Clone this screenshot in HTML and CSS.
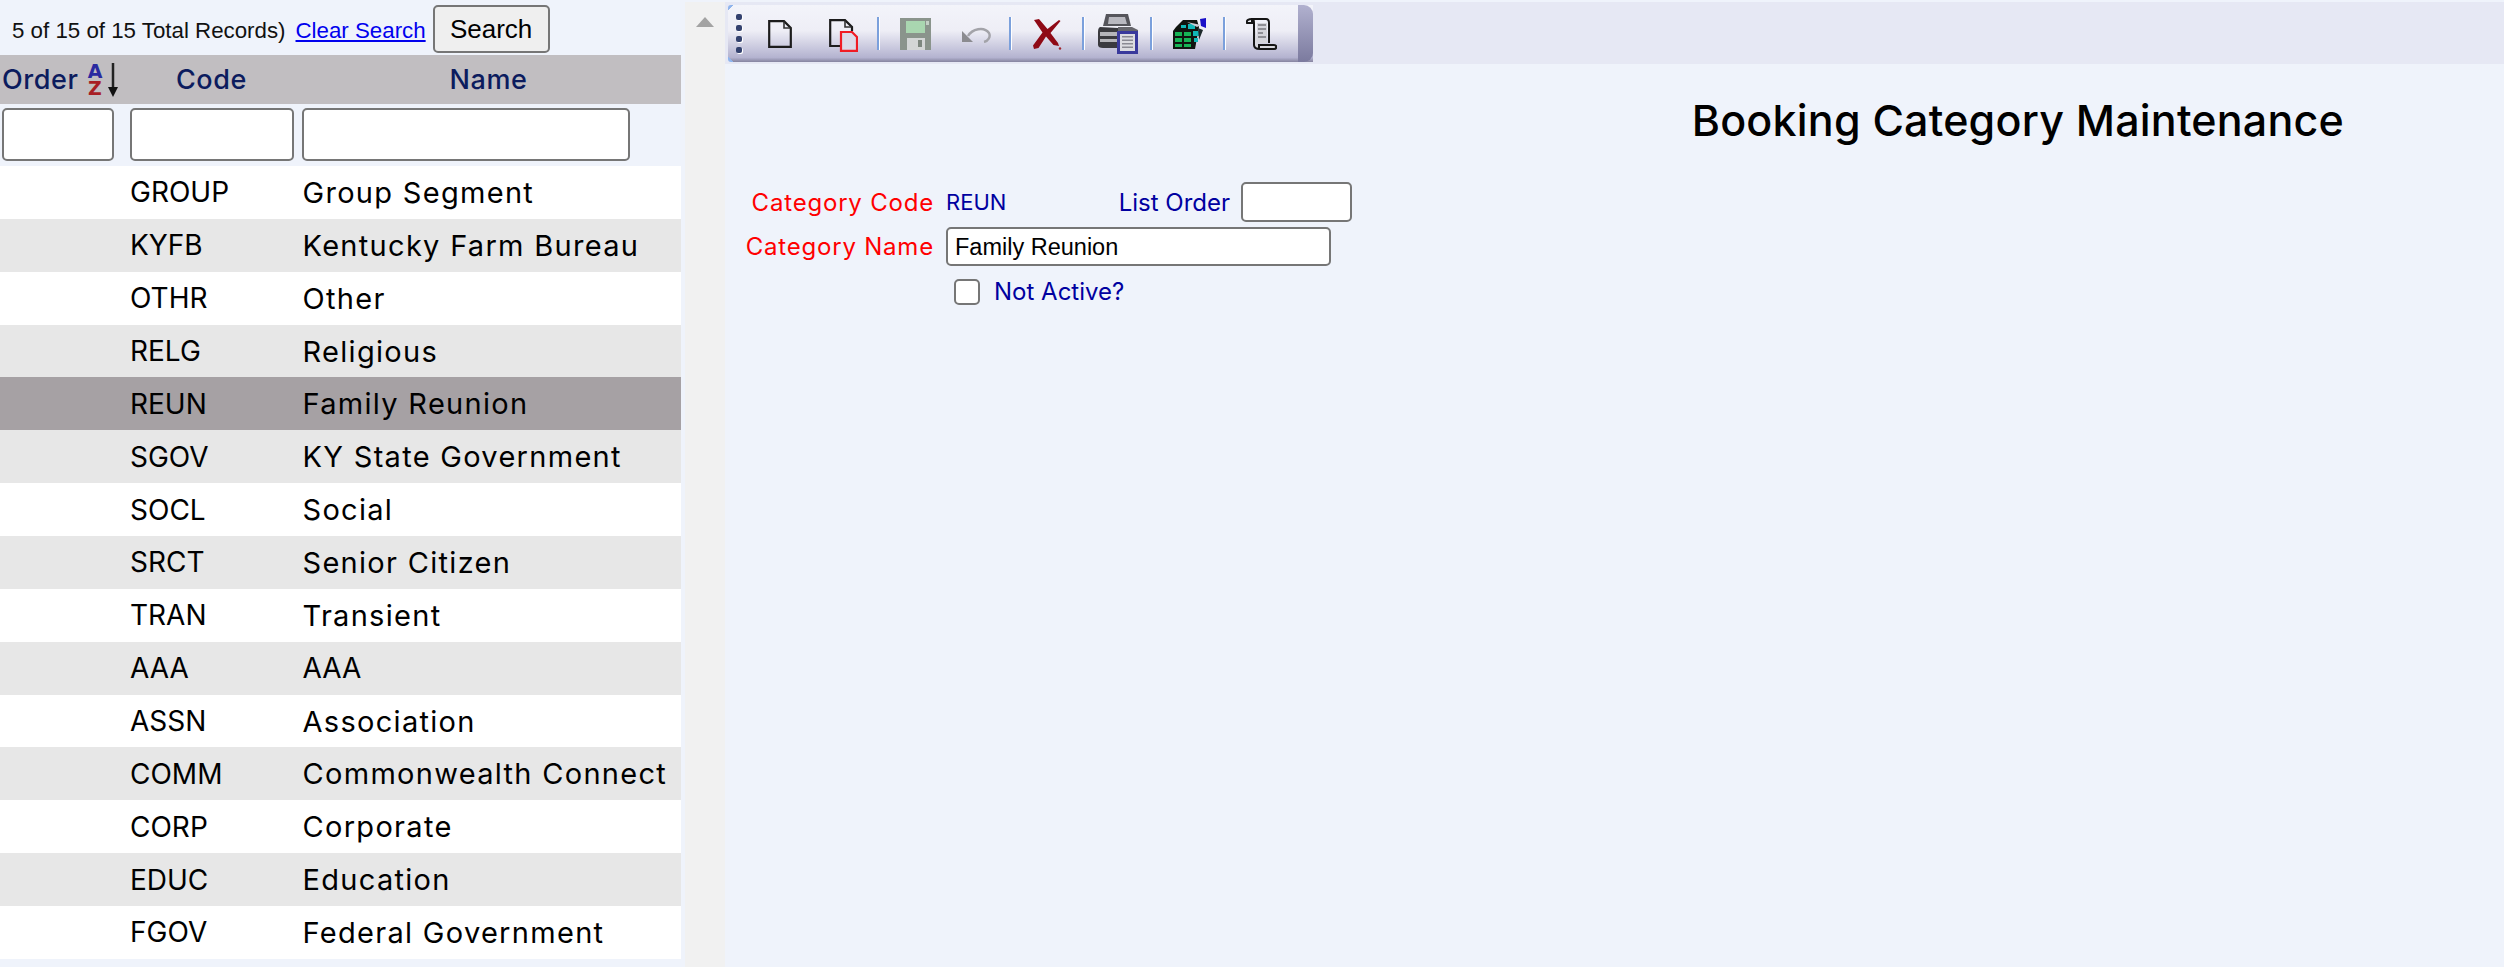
FILE: index.html
```html
<!DOCTYPE html>
<html lang="en">
<head>
    <meta charset="UTF-8">
    <title>Booking Category Maintenance</title>
    <link rel="stylesheet" href="styles.css">
</head>
<body>
    <div class="list-pane">
        <div class="search-bar">
            <span class="record-count">5 of 15 of 15 Total Records)</span>
            <a class="clear-link" href="#">Clear Search</a>
            <button class="search-btn" type="button">Search</button>
        </div>
        <div class="list-head">
            <div class="head-order">Order
                <svg class="sort-icon" width="34" height="36" viewBox="0 0 34 36">
                    <text x="9" y="16" class="sort-a">A</text>
                    <text x="9" y="33" class="sort-z">Z</text>
                    <path d="M27 1V27" stroke="#222" stroke-width="2.5"/>
                    <path d="M22 25H32L27 35Z" fill="#111"/>
                </svg>
            </div>
            <div class="head-code">Code</div>
            <div class="head-name">Name</div>
        </div>
        <div class="filter-row">
            <input class="filter-order" type="text">
            <input class="filter-code" type="text">
            <input class="filter-name" type="text">
        </div>
        <div class="rows">
            <div class="row"><span>GROUP</span><span>Group Segment</span></div>
            <div class="row"><span>KYFB</span><span>Kentucky Farm Bureau</span></div>
            <div class="row"><span>OTHR</span><span>Other</span></div>
            <div class="row"><span>RELG</span><span>Religious</span></div>
            <div class="row selected"><span>REUN</span><span>Family Reunion</span></div>
            <div class="row"><span>SGOV</span><span>KY State Government</span></div>
            <div class="row"><span>SOCL</span><span>Social</span></div>
            <div class="row"><span>SRCT</span><span>Senior Citizen</span></div>
            <div class="row"><span>TRAN</span><span>Transient</span></div>
            <div class="row"><span>AAA</span><span class="caps">AAA</span></div>
            <div class="row"><span>ASSN</span><span>Association</span></div>
            <div class="row"><span>COMM</span><span>Commonwealth Connect</span></div>
            <div class="row"><span>CORP</span><span>Corporate</span></div>
            <div class="row"><span>EDUC</span><span>Education</span></div>
            <div class="row"><span>FGOV</span><span>Federal Government</span></div>
        </div>
    </div>

    <div class="scroll-track"><div class="scroll-up"></div></div>

    <div class="main-pane">
        <div class="toolbar-band">
            <div class="toolbar">
                <div class="grip"><i></i><i></i><i></i><i></i></div>
                <svg class="tb-new" width="24" height="28" viewBox="0 0 24 28">
                    <path d="M1.2 1.2H16L22.8 8V26.8H1.2Z" fill="none" stroke="#1c1c1c" stroke-width="2.2"/>
                    <path d="M16 1.5V8H22.5" fill="none" stroke="#333" stroke-width="1.6"/>
                </svg>
                <svg class="tb-copy" width="29" height="33" viewBox="0 0 29 33">
                    <path d="M11 27H1.2V1.2H16L23 8V12" fill="none" stroke="#1c1c1c" stroke-width="2.2"/>
                    <path d="M16 1.5V8H22.5" fill="none" stroke="#333" stroke-width="1.6"/>
                    <path d="M12 13H23L28 18V31.8H12Z" fill="#dcdbe8" stroke="#f01c24" stroke-width="2.2"/>
                </svg>
                <span class="tb-sep sep-1"></span>
                <svg class="tb-save" width="31" height="32" viewBox="0 0 31 32">
                    <path d="M0 0H31V32H0Z" fill="#8a948c"/>
                    <path d="M6 3H25V15H6Z" fill="#a9d6b0"/>
                    <path d="M26 3H29V7H26Z" fill="#c3cfc5"/>
                    <path d="M7 20H25V32H7Z" fill="#d3d6d6"/>
                    <path d="M18 22H22V29H18Z" fill="#7d877f"/>
                </svg>
                <svg class="tb-undo" width="29" height="16" viewBox="0 0 29 16">
                    <path d="M6 9C10 2 22 -1 27 6C29 10 26 14 22 15" fill="none" stroke="#a3a3a9" stroke-width="2.4"/>
                    <path d="M0 4L11 15H0Z" fill="#8b8b90"/>
                </svg>
                <span class="tb-sep sep-2"></span>
                <svg class="tb-delete" width="30" height="32" viewBox="0 0 30 32">
                    <path d="M2 2L7 1L15.500 11L27 2L28.500 3L18.500 15L26 25L27 28L21.500 27L14 18.500L6.500 30L2 31L1 27.500L10.500 14.500Z" fill="#8f0a16"/>
                    <circle cx="28" cy="30.500" r="1.2" fill="#a0242c"/>
                </svg>
                <span class="tb-sep sep-3"></span>
                <svg class="tb-print" width="40" height="40" viewBox="0 0 40 40">
                    <path d="M8 0H30L33 12H5Z" fill="#55555b"/>
                    <path d="M11 3H27L29 10H10Z" fill="#b9b9c0"/>
                    <path d="M2 13C0 14 0 16 0 20V31C0 33 2 34 5 34H20V14Z" fill="#3a3a3f"/>
                    <path d="M2 18H20V22H2ZM2 25H20V28H2Z" fill="#b4b4b9"/>
                    <path d="M20 13H34L40 16V18H20Z" fill="#66666c"/>
                    <path d="M19 17H40V40H19Z" fill="#3a3a9c"/>
                    <path d="M22 20H37V37H22Z" fill="#dcdce0"/>
                    <path d="M24 22H35V23.500H24ZM24 25.500H35V27H24ZM24 29H35V30.500H24ZM24 32.500H35V34H24Z" fill="#8a8a92"/>
                </svg>
                <span class="tb-sep sep-4"></span>
                <svg class="tb-grid" width="33" height="31" viewBox="0 0 33 31">
                    <path d="M3 9L10 2H24L26 9L22 31H0V13Z" fill="#101510"/>
                    <path d="M2 14H9V18H2ZM11 14H18V18H11ZM2 20H9V24H2ZM11 20H18V24H11ZM2 26H9V29H2ZM11 26H18V29H11Z" fill="#16b455"/>
                    <path d="M8 7H13V10H8ZM15 6H22V11H15ZM20 13H26V18H20ZM21 20H25V24H21Z" fill="#10b8b8"/>
                    <path d="M14 4L28 7L24 9Z" fill="#c8ccd4"/>
                    <path d="M27 1L33 0V10L28 8Z" fill="#1a10c8"/>
                    <path d="M25 10L30 12L26 22Z" fill="#1e2a2c"/>
                </svg>
                <span class="tb-sep sep-5"></span>
                <svg class="tb-scroll" width="31" height="32" viewBox="0 0 31 32">
                    <path d="M6 4V1H20C23 1 23 3 23 5V25" fill="none" stroke="#151515" stroke-width="2"/>
                    <path d="M1 5C0 2 3 1 6 1C8 1 8 3 8 5H1Z" fill="none" stroke="#151515" stroke-width="2"/>
                    <path d="M8 5V27C8 31 12 31 14 31H28C31 31 31 27 28 27H13V30" fill="#d8d8de" stroke="#151515" stroke-width="2"/>
                    <path d="M11 5H21V25H11Z" fill="#d4d4da"/>
                    <path d="M12 7H20M12 11H20M12 15H17M12 19H20" stroke="#77777d" stroke-width="1.600"/>
                </svg>
                <span class="toolbar-cap"></span>
            </div>
        </div>

        <h1 class="page-title">Booking Category Maintenance</h1>

        <form class="edit-form">
            <label class="req-label">Category Code</label>
            <div class="code-line">
                <span class="value-text code-value">REUN</span>
                <label class="value-text order-label">List Order</label>
                <input class="order-input" type="text">
            </div>
            <label class="req-label name-label">Category Name</label>
            <input class="name-input" type="text" value="Family Reunion">
            <div class="check-line">
                <input class="active-check" type="checkbox" id="notActive">
                <label class="value-text" for="notActive">Not Active?</label>
            </div>
        </form>
    </div>
</body>
</html>
```

FILE: styles.css
```css
body {
    margin: 0;
    height: 967px;
    overflow: hidden;
    display: flex;
    background-color: #eff3fb;
    font-family: Inter, "Liberation Sans", sans-serif;
}
input, button {
    box-sizing: border-box;
    border: 2px solid #767676;
    border-radius: 5px;
    background-color: #fff;
    padding: 0;
    margin: 0;
}

/* left list */
.list-pane {
    width: 681px;
    flex-shrink: 0;
}
.search-bar {
    height: 55px;
    display: flex;
    align-items: flex-start;
    padding-left: 12px;
    box-sizing: border-box;
    font-family: "Liberation Sans", Arial, sans-serif;
    font-size: 22.3px;
}
.record-count {
    margin-top: 18px;
    color: #111;
}
.clear-link {
    margin: 18px 0 0 10px;
    color: #0000ee;
}
.search-btn {
    margin: 5px 0 0 7px;
    width: 117px;
    height: 48px;
    background-color: #efefef;
    font-family: "Liberation Sans", Arial, sans-serif;
    font-size: 26px;
    color: #000;
}
.list-head {
    height: 49px;
    background-color: #c1bec1;
    display: grid;
    grid-template-columns: 130px 163px 1fr;
    align-items: center;
    color: #0c1c5e;
    font-size: 27px;
    letter-spacing: 0.6px;
    font-weight: 500;
}
.head-order {
    display: flex;
    align-items: center;
    padding-left: 2px;
    gap: 7px;
}
.head-code {
    text-align: center;
}
.head-name {
    text-align: center;
    padding-left: 9px;
    width: 382px;
    box-sizing: border-box;
}
.sort-icon text {
    font-family: "DejaVu Sans", sans-serif;
    font-size: 19px;
    font-weight: 700;
    letter-spacing: 0;
    text-anchor: middle;
}
.sort-a {
    fill: #2a2aa0;
}
.sort-z {
    fill: #a81e24;
}
.filter-row {
    height: 62px;
    padding: 4px 0 0 2px;
    box-sizing: border-box;
    display: flex;
}
.filter-row input {
    height: 53px;
}
.filter-order {
    width: 112px;
}
.filter-code {
    width: 164px;
    margin-left: 16px;
}
.filter-name {
    width: 328px;
    margin-left: 8px;
}
.row {
    height: 52.87px;
    display: grid;
    grid-template-columns: 172.5px 1fr;
    align-items: center;
    padding-left: 130px;
    background-color: #fff;
    font-size: 28px;
    color: #000;
    white-space: nowrap;
}
.row span:last-child {
    font-size: 29px;
    letter-spacing: 1.3px;
}
.row span.caps {
    font-size: 28px;
    letter-spacing: 0;
}
.row:nth-child(even) {
    background-color: #e7e7e7;
}
.row.selected {
    background-color: #a6a1a4;
}

/* fake scrollbar */
.scroll-track {
    width: 40px;
    margin: 2px 0 0 4px;
    flex-shrink: 0;
    background-color: #f1f1f1;
    padding-top: 15px;
    box-sizing: border-box;
}
.scroll-up {
    width: 0;
    margin: 0 auto;
    border-left: 9px solid transparent;
    border-right: 9px solid transparent;
    border-bottom: 10px solid #a3a3a3;
}

/* right side */
.main-pane {
    flex: 1;
}
.toolbar-band {
    margin-top: 2px;
    height: 62px;
    background-color: #e6e8f4;
    padding: 3px 0 0 3px;
    box-sizing: border-box;
}
.toolbar {
    width: 585px;
    height: 57px;
    display: flex;
    align-items: center;
    padding-left: 8px;
    box-sizing: border-box;
    border-radius: 3px 0 0 3px;
    background:
        linear-gradient(135deg, #8fb4ec 4px, transparent 4px),
        linear-gradient(45deg, #8fb4ec 4px, transparent 4px),
        linear-gradient(#f3f4fa 0, #eeeef6 45%, #b4b3d0 92%, #85839f 100%);
}
.toolbar svg,
.grip,
.tb-sep {
    filter: blur(0.5px);
}
.grip {
    display: flex;
    flex-direction: column;
    gap: 5px;
}
.grip i {
    display: block;
    width: 6px;
    height: 6px;
    border-radius: 2px;
    background-color: #33416e;
    box-shadow: 1px 1px 0 #fff;
}
.tb-sep {
    width: 2px;
    height: 33px;
    background-color: #7ba0dc;
    box-shadow: 1px 0 0 #fff;
}
.tb-new { margin-left: 26px; }
.tb-copy { margin-left: 37px; margin-top: 3px; }
.sep-1 { margin-left: 19px; }
.tb-save { margin-left: 21px; }
.tb-undo { margin-left: 31px; margin-top: 3px; }
.sep-2 { margin-left: 18px; }
.tb-delete { margin-left: 21px; }
.sep-3 { margin-left: 20px; }
.tb-print { margin-left: 14px; }
.sep-4 { margin-left: 12px; }
.tb-grid { margin-left: 21px; }
.sep-5 { margin-left: 17px; }
.tb-scroll { margin-left: 21px; }
.toolbar-cap {
    margin-left: auto;
    align-self: stretch;
    width: 15px;
    border-radius: 0 9px 9px 0;
    background: linear-gradient(#b1b1cf, #7b7a9e);
}
.page-title {
    margin: 31px 160px 0 0;
    height: 50px;
    line-height: 50px;
    text-align: right;
    font-size: 43px;
    letter-spacing: 0.2px;
    font-weight: 500;
    color: #000;
}
.edit-form {
    display: grid;
    grid-template-columns: 209px 1fr;
    column-gap: 12px;
    align-items: center;
    margin-top: 37px;
    font-size: 24px;
}
.req-label {
    text-align: right;
    color: #ff0000;
    letter-spacing: 0.8px;
}
.name-label {
    margin-top: 5px;
}
.value-text {
    color: #0000a0;
}
.code-value {
    font-size: 22px;
}
.code-line {
    display: flex;
    align-items: center;
    width: 406px;
    height: 40px;
}
.order-label {
    margin-left: auto;
}
.order-input {
    width: 111px;
    height: 40px;
    margin-left: 11px;
}
.name-input {
    width: 385px;
    height: 39px;
    margin-top: 5px;
    padding: 2px 0 0 7px;
    font-family: "Liberation Sans", Arial, sans-serif;
    font-size: 23.5px;
    color: #000;
}
.check-line {
    grid-column: 2;
    display: flex;
    align-items: center;
    margin: 11px 0 0 8px;
}
.active-check {
    appearance: none;
    box-sizing: border-box;
    width: 26px;
    height: 26px;
    margin: 0 14px 0 0;
}
```
